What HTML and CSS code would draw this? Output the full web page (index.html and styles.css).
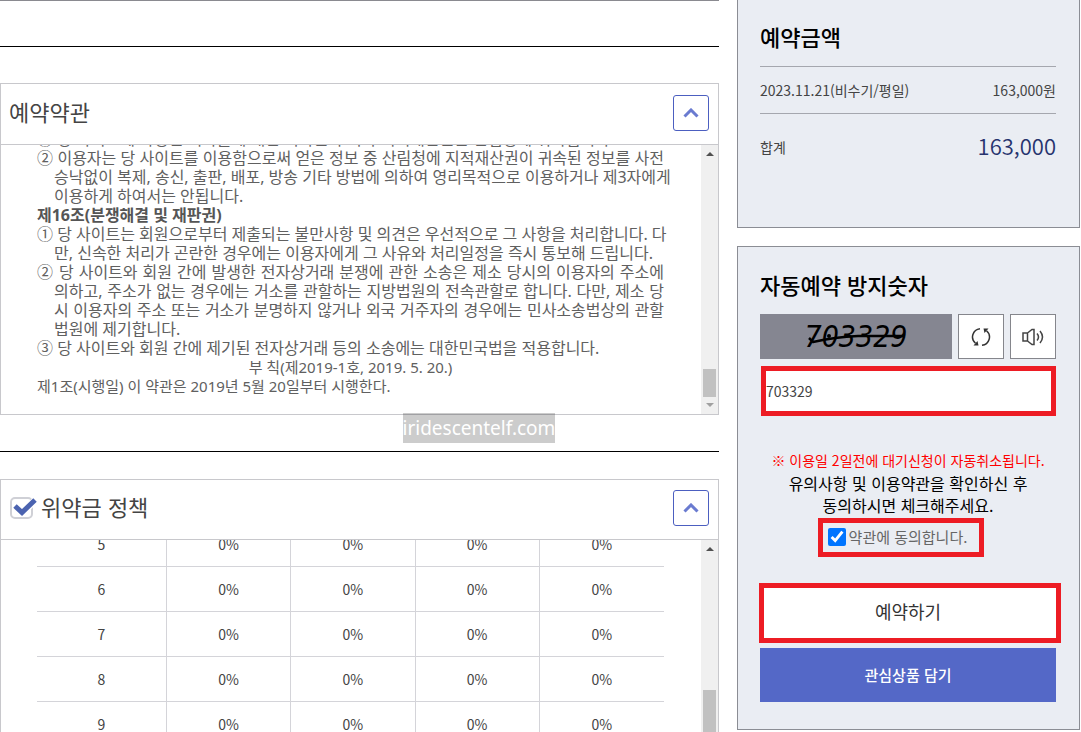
FILE: index.html
```
<!DOCTYPE html>
<html lang="ko">
<head>
<meta charset="utf-8">
<title>예약약관</title>
<link rel="stylesheet" href="styles.css">
</head>
<body>
<div class="page">
  <main class="main">
    <div class="rule-top"></div>
    <section class="panel terms">
      <header class="panel-head">
        <h2>예약약관</h2>
        <button class="toggle" type="button" aria-label="예약약관 접기"><svg viewBox="0 0 16 10" width="16" height="10"><path d="M1.5 8.500 8 2l6.500 6.500"/></svg></button>
      </header>
      <div class="panel-body">
        <div class="terms-text">
          <p class="item"><span>① 당 사이트에 작성된 저작물에 대한 저작권과 기타 지적재산권은 산림청에 귀속됩니다.</span></p>
          <p class="item"><span class="line">② 이용자는 당 사이트를 이용함으로써 얻은 정보 중 산림청에 지적재산권이 귀속된 정보를 사전</span><span class="line">승낙없이 복제, 송신, 출판, 배포, 방송 기타 방법에 의하여 영리목적으로 이용하거나 제3자에게</span><span>이용하게 하여서는 안됩니다.</span></p>
          <h3>제16조(분쟁해결 및 재판권)</h3>
          <p class="item"><span class="line">① 당 사이트는 회원으로부터 제출되는 불만사항 및 의견은 우선적으로 그 사항을 처리합니다. 다</span><span>만, 신속한 처리가 곤란한 경우에는 이용자에게 그 사유와 처리일정을 즉시 통보해 드립니다.</span></p>
          <p class="item"><span class="line">② 당 사이트와 회원 간에 발생한 전자상거래 분쟁에 관한 소송은 제소 당시의 이용자의 주소에</span><span class="line">의하고, 주소가 없는 경우에는 거소를 관할하는 지방법원의 전속관할로 합니다. 다만, 제소 당</span><span class="line">시 이용자의 주소 또는 거소가 분명하지 않거나 외국 거주자의 경우에는 민사소송법상의 관할</span><span>법원에 제기합니다.</span></p>
          <p class="item"><span>③ 당 사이트와 회원 간에 제기된 전자상거래 등의 소송에는 대한민국법을 적용합니다.</span></p>
          <p class="center">부 칙(제2019-1호, 2019. 5. 20.)</p>
          <p>제1조(시행일) 이 약관은 2019년 5월 20일부터 시행한다.</p>
        </div>
        <div class="scroll"><i class="up"></i><i class="thumb"></i><i class="down"></i></div>
      </div>
      <span class="watermark">iridescentelf.com</span>
    </section>
    <div class="rule"></div>
    <section class="panel policy">
      <header class="panel-head">
        <h2><svg class="check" viewBox="0 0 28 26" width="28" height="26"><rect x="2" y="5" width="21" height="20" rx="4" fill="#fff" stroke="#cfd0d6" stroke-width="2"/><path d="M7 13.500l6.500 6L25.500 8" fill="none" stroke="#fff" stroke-width="7"/><path d="M6 13l7 6.500L26 7" fill="none" stroke="#4b63b0" stroke-width="5"/></svg>위약금 정책</h2>
        <button class="toggle" type="button" aria-label="위약금 정책 접기"><svg viewBox="0 0 16 10" width="16" height="10"><path d="M1.500 8.500 8 2l6.500 6.500"/></svg></button>
      </header>
      <div class="panel-body">
        <div class="table-wrap">
          <table>
            <colgroup><col class="day"><col><col><col><col></colgroup>
            <tbody>
              <tr><td>5</td><td>0%</td><td>0%</td><td>0%</td><td>0%</td></tr>
              <tr><td>6</td><td>0%</td><td>0%</td><td>0%</td><td>0%</td></tr>
              <tr><td>7</td><td>0%</td><td>0%</td><td>0%</td><td>0%</td></tr>
              <tr><td>8</td><td>0%</td><td>0%</td><td>0%</td><td>0%</td></tr>
              <tr><td>9</td><td>0%</td><td>0%</td><td>0%</td><td>0%</td></tr>
            </tbody>
          </table>
        </div>
        <div class="scroll"><i class="up"></i><i class="thumb"></i></div>
      </div>
    </section>
  </main>
  <aside class="side">
    <section class="card price">
      <h2>예약금액</h2>
      <dl class="row"><dt>2023.11.21(비수기/평일)</dt><dd>163,000원</dd></dl>
      <dl class="row total"><dt>합계</dt><dd>163,000</dd></dl>
    </section>
    <form class="card confirm">
      <h2><label for="code">자동예약 방지숫자</label></h2>
      <div class="captcha">
        <div class="captcha-img">
          <span>703329</span>
          <svg class="strike" viewBox="0 0 100 26" width="100" height="26"><path d="M3 14l4 4q22-5 45-6h46" fill="none" stroke="#000" stroke-width="2.500"/><circle cx="23" cy="12" r="2"/></svg>
        </div>
        <button type="button" class="icon" aria-label="새로고침"><svg viewBox="0 0 20 20" width="20" height="20" fill="none" stroke="#333" stroke-width="1.500"><path d="M9 1.700A8.300 8.300 0 0 0 4.500 16.300M11 18.300A8.300 8.300 0 0 0 15.500 3.700"/><path d="M2.500 18.500h5l-1-4.500zM17.500 1.500h-5l1 4.500z" fill="#333" stroke="none"/></svg></button>
        <button type="button" class="icon" aria-label="음성듣기"><svg viewBox="0 0 24 20" width="24" height="20" fill="none" stroke="#444" stroke-width="1.500"><path d="M2 6h4.500v8H2zM6.500 6 11 2.500h2v15h-2L6.500 14M16 6.500q3 3.500 0 7M19 4q5 6 0 12"/></svg></button>
      </div>
      <input class="code" id="code" type="text" value="703329">
      <p class="warn">※ 이용일 2일전에 대기신청이 자동취소됩니다.</p>
      <p class="guide">유의사항 및 이용약관을 확인하신 후<br>동의하시면 체크해주세요.</p>
      <label class="agree"><input type="checkbox" checked>약관에 동의합니다.</label>
      <button type="button" class="reserve">예약하기</button>
      <button type="button" class="wish">관심상품 담기</button>
    </form>
  </aside>
</div>
</body>
</html>
```
FILE: styles.css
```
* { box-sizing: border-box; }
body, h2, h3, p, dl, dd { margin: 0; }
body {
  font-family: "Noto Sans CJK KR", sans-serif;
  font-size: 14px;
  color: #444;
  background: #fff;
}
button, input { font: inherit; margin: 0; }
button { cursor: pointer; padding: 0; }

.page { display: flex; gap: 18px; height: 100vh; padding-right: 1px; overflow: hidden; }
.main { flex: 1; min-width: 0; display: flex; flex-direction: column; }
.rule-top { height: 47px; flex: none; border-top: 1px solid #8a8a90; border-bottom: 1px solid #000; margin-bottom: 36px; }
.rule { flex: none; border-top: 1px solid #000; margin: 36px 0 27px; }

.panel { position: relative; border: 1px solid #c8c8cc; display: flex; flex-direction: column; }
.terms { flex: none; }
.policy { flex: 1; min-height: 0; border-bottom: 0; }
.panel-head {
  flex: none;
  display: flex;
  align-items: flex-start;
  justify-content: space-between;
  height: 61px;
  padding: 11px 9px 0 8px;
  border-bottom: 1px solid #c8c8cc;
}
.policy .panel-head { height: 60px; padding-top: 10px; }
.panel-head h2 { display: flex; align-items: center; gap: 4px; font-size: 22px; line-height: 32px; font-weight: 400; }
.toggle { display: grid; place-items: center; width: 36px; height: 36px; border: 1px solid #4c5fc0; border-radius: 3px; background: #fff; }
.toggle path { fill: none; stroke: #6a7bd0; stroke-width: 3; }
.panel-body { display: flex; flex: 1; min-height: 0; overflow: hidden; }
.terms .panel-body { height: 269px; flex: none; }

.terms-text {
  flex: 1;
  min-width: 0;
  display: flex;
  flex-direction: column;
  justify-content: flex-end;
  padding: 0 37px 18px 36px;
  font-family: "Noto Sans", "Noto Sans CJK KR", sans-serif;
  font-size: 15px;
  line-height: 19px;
  color: #606060;
}
.terms-text p { white-space: nowrap; }
.terms-text h3 { font-size: 16px; line-height: 19px; color: #555; }
.terms-text .item { padding-left: 17px; font-size: 16px; }
.item span { display: block; }
.item span:first-child { margin-left: -17px; }
.item .line { text-align: justify; text-align-last: justify; }
.terms-text .center { text-align: center; }

.scroll { flex: none; width: 17px; display: flex; flex-direction: column; align-items: center; background: #f0f0f0; }
.up, .down { border: 4px solid transparent; }
.up { border-top: 0; border-bottom-color: #505050; margin: 7px 0 6px; }
.down { border-bottom: 0; border-top-color: #a0a0a0; margin: 6px 0 7px; }
.thumb { width: 13px; height: 28px; background: #c1c1c1; margin-top: auto; }
.policy .thumb { height: 42px; }

.watermark {
  position: absolute;
  left: 56%;
  top: 100%;
  margin-top: -1px;
  line-height: 30px;
  font-family: "Noto Sans", sans-serif;
  font-size: 19px;
  color: #fff;
  background: rgba(0, 0, 0, .2);
}

.table-wrap { flex: 1; padding: 0 37px 0 36px; }
table { width: 100%; margin-top: -18px; table-layout: fixed; border-collapse: separate; border-spacing: 0; }
.day { width: 130px; }
td { height: 45px; padding: 0; text-align: center; border-bottom: 1px solid #d4d4d9; border-right: 1px solid #d4d4d9; }
td:last-child { border-right: 0; }

.side { width: 343px; flex: none; display: flex; flex-direction: column; gap: 18px; }
.card { background: #eaedf3; border: 1px solid #8b8d94; padding: 0 23px 0 22px; }
.card h2 { font-size: 22px; line-height: 32px; font-weight: 500; color: #000; }
.price { height: 228px; border-top: 0; padding-top: 20px; }
.row { display: flex; align-items: center; justify-content: space-between; height: 47px; border-top: 1px solid #a5a7ae; }
.price h2 { margin-bottom: 14px; }
.total { height: 56px; padding-top: 10px; }
.total dd { font-size: 22px; line-height: 32px; padding-bottom: 4px; color: #26336e; font-weight: 350; }

.confirm { display: flex; flex-direction: column; padding-top: 21px; padding-bottom: 27px; }
.captcha { display: flex; gap: 6px; margin: 14px 0 7px; height: 45px; }
.captcha-img { position: relative; flex: 1; display: grid; place-items: center; background: #858691; color: #000; }
.captcha-img span { font: italic 30px/45px "DejaVu Sans Condensed", "DejaVu Sans", sans-serif; }
.strike { position: absolute; left: 46px; top: 10px; }
.icon { width: 46px; display: grid; place-items: center; background: #fff; border: 1px solid #85868c; }
.code { height: 50px; margin-left: 1px; border: 5px solid #ed1c24; background: #fff; padding: 0; color: #444; }
.warn, .guide { text-align: center; }
.warn { margin-top: 33px; font-size: 14px; line-height: 22px; color: #f00; }
.guide { margin-top: 1px; font-size: 16px; line-height: 22px; color: #000; }
.agree {
  align-self: center;
  display: flex;
  align-items: center;
  gap: 3px;
  height: 39px;
  margin: 2px 14px 26px 0;
  padding: 0 12px 2px 5px;
  border: 5px solid #ed1c24;
  font-size: 15px;
  color: #666;
}
.agree input { width: 18px; height: 18px; accent-color: #0075ff; }
.reserve { height: 60px; margin: 0 -5px 5px -1px; padding: 0 4px 4px 0; border: 5px solid #ed1c24; background: #fff; font-size: 18px; color: #333; }
.wish { height: 54px; border: 0; padding-bottom: 2px; background: #5468c7; color: #fff; font-size: 15px; font-weight: 500; }
```
